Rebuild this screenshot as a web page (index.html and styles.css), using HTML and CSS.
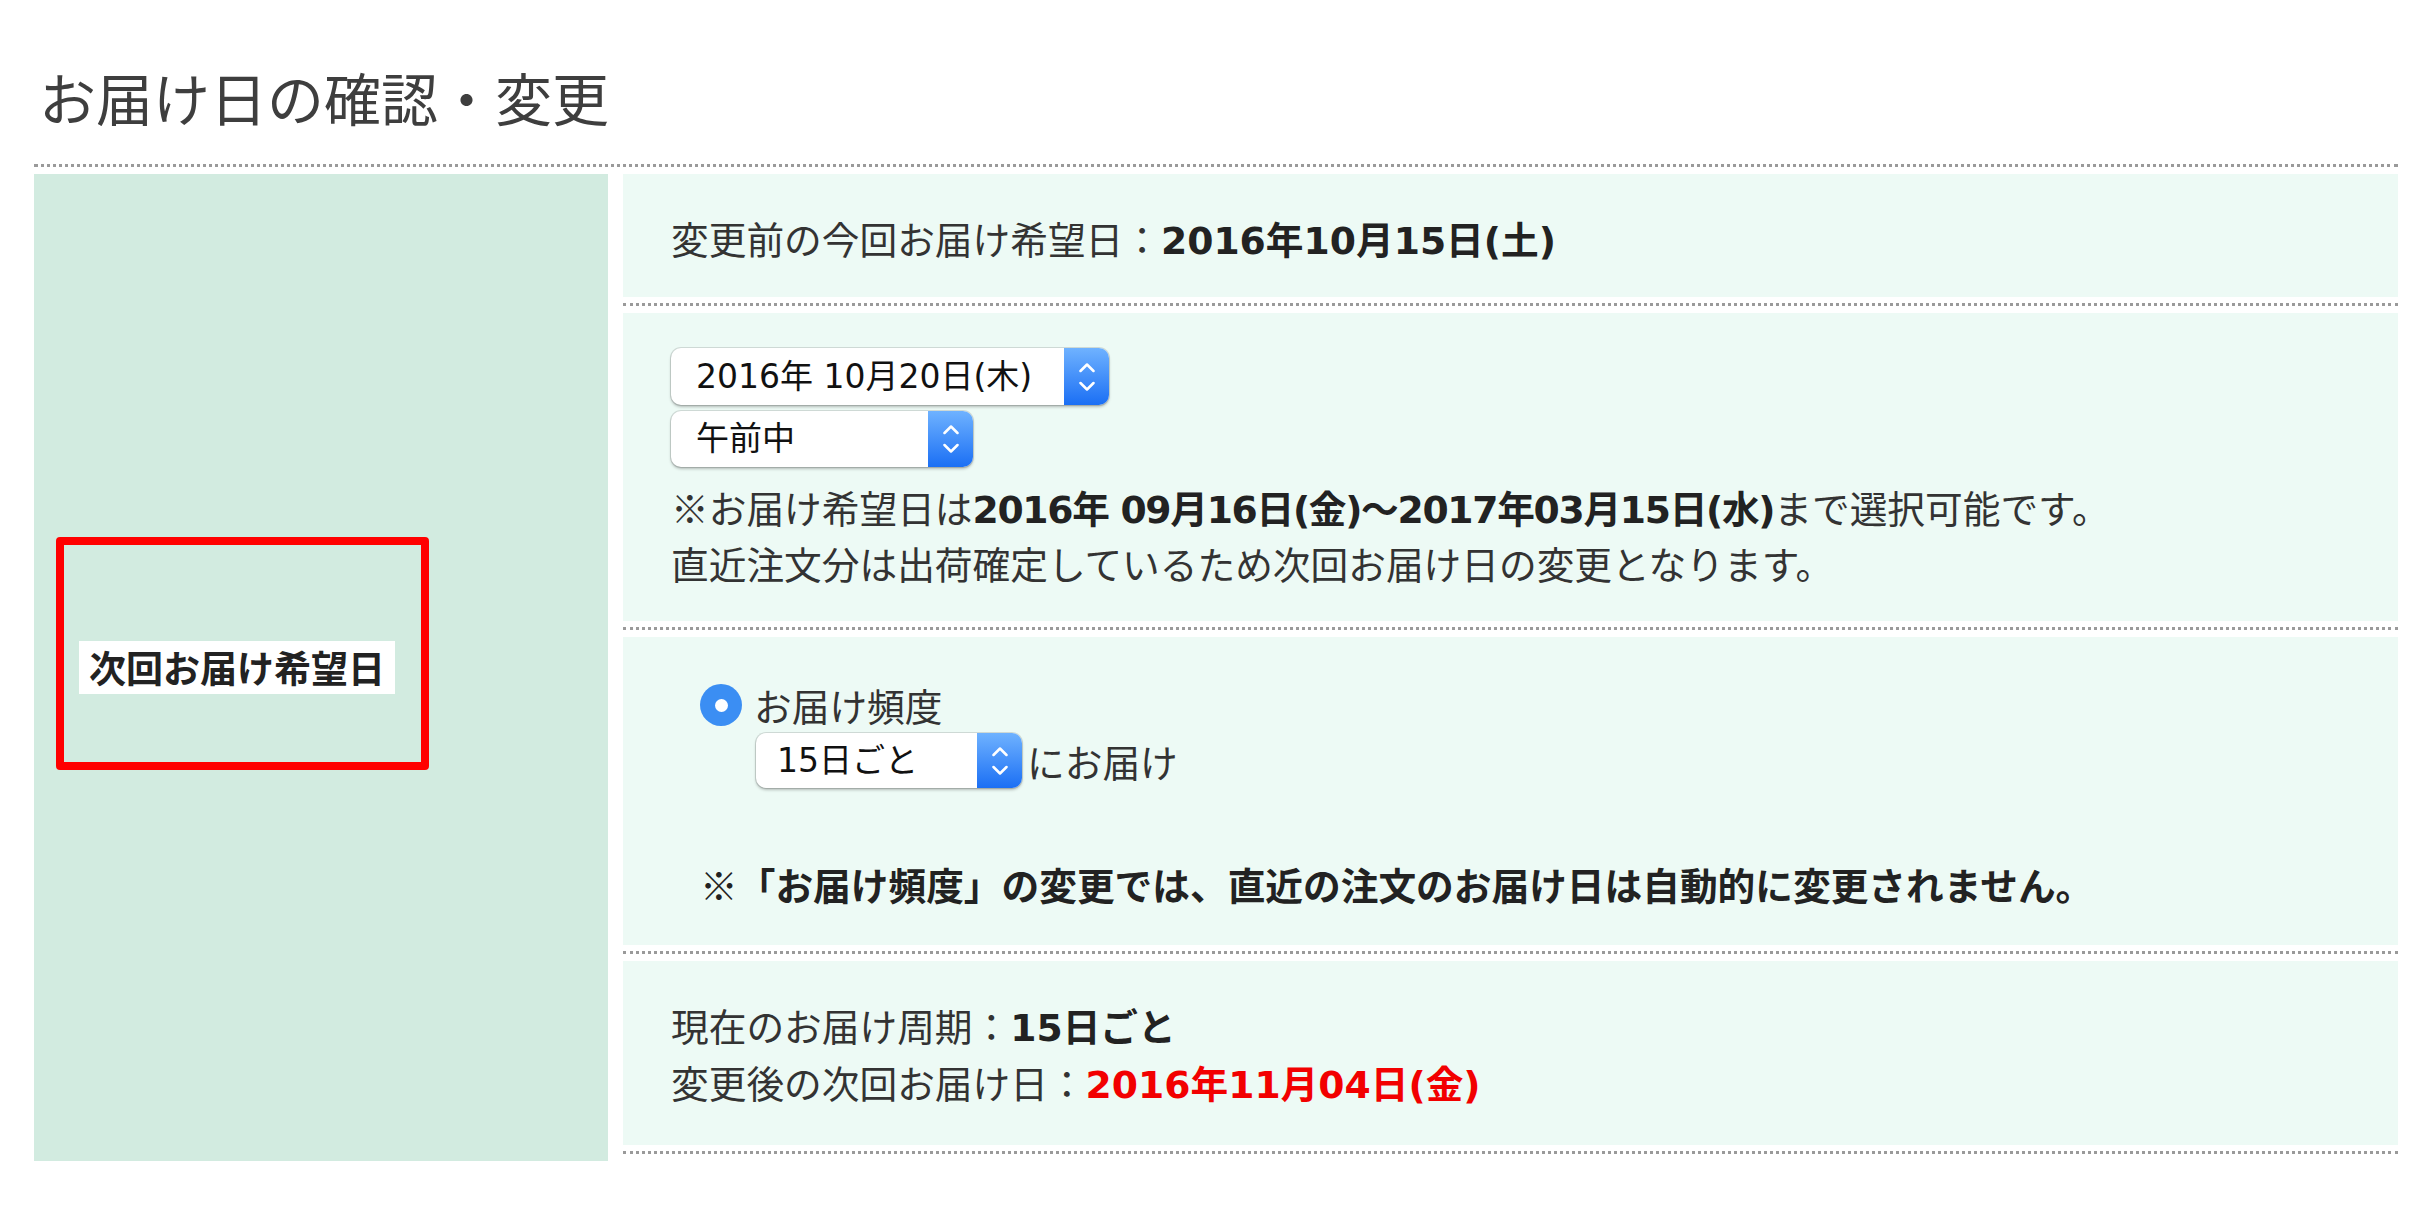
FILE: index.html
```html
<!DOCTYPE html>
<html lang="ja">
<head>
<meta charset="utf-8">
<title>お届け日の確認・変更</title>
<link rel="stylesheet" href="styles.css">
</head>
<body>
<div class="page">
  <h1 class="title">お届け日の確認・変更</h1>
  <div class="table">
    <div class="label-cell">
      <span class="label">次回お届け希望日</span>
      <div class="annot"></div>
    </div>
    <div class="right">
      <div class="row row1">変更前の今回お届け希望日：<b>2016年10月15日(土)</b></div>
      <div class="sep"></div>
      <div class="row row2">
        <div class="select sel-date"><span class="sel-text">2016年 10月20日(木)</span><span class="sel-arrow"><svg width="16" height="30" viewBox="0 0 16 30"><polyline points="1.5,9 8,2.5 14.5,9" /><polyline points="1.5,21 8,27.5 14.5,21" /></svg></span></div>
        <div class="select sel-time"><span class="sel-text">午前中</span><span class="sel-arrow"><svg width="16" height="30" viewBox="0 0 16 30"><polyline points="1.5,9 8,2.5 14.5,9" /><polyline points="1.5,21 8,27.5 14.5,21" /></svg></span></div>
        <p class="note">※お届け希望日は<b>2016年 09月16日(金)〜2017年03月15日(水)</b>まで選択可能です。<br>直近注文分は出荷確定しているため次回お届け日の変更となります。</p>
      </div>
      <div class="sep"></div>
      <div class="row row3">
        <div class="radio-line"><span class="radio"><span class="radio-dot"></span></span><span>お届け頻度</span></div>
        <div class="freq-line"><div class="select sel-freq"><span class="sel-text">15日ごと</span><span class="sel-arrow"><svg width="16" height="30" viewBox="0 0 16 30"><polyline points="1.5,9 8,2.5 14.5,9" /><polyline points="1.5,21 8,27.5 14.5,21" /></svg></span></div><span class="freq-after">にお届け</span></div>
        <p class="warn">※「お届け頻度」の変更では、直近の注文のお届け日は自動的に変更されません。</p>
      </div>
      <div class="sep"></div>
      <div class="row row4">現在のお届け周期：<b>15日ごと</b><br>変更後の次回お届け日：<b class="red">2016年11月04日(金)</b></div>
      <div class="sep"></div>
    </div>
  </div>
</div>
</body>
</html>
```

FILE: styles.css
```css
html, body {
  margin: 0;
  padding: 0;
  background: #ffffff;
}
body {
  font-family: "Noto Sans CJK JP", "Noto Sans", sans-serif;
  color: #333333;
}
.page {
  padding: 0 28px 0 34px;
}
.title {
  margin: 0;
  padding: 56px 0 28px 5px;
  font-size: 57px;
  line-height: 80px;
  font-weight: normal;
  color: #3e3e3e;
}
.table {
  border-top: 3px dotted #9a9a9a;
  padding-top: 7px;
  display: flex;
}
.label-cell {
  position: relative;
  width: 574px;
  flex: none;
  background: #d2ebe0;
  display: flex;
  align-items: center;
  padding-left: 45px;
  box-sizing: border-box;
}
.label {
  background: #ffffff;
  font-size: 37px;
  line-height: 53px;
  font-weight: bold;
  color: #222222;
  padding: 0 10px;
}
.annot {
  position: absolute;
  left: 22px;
  top: 363px;
  width: 373px;
  height: 233px;
  box-sizing: border-box;
  border: 8px solid #ff0000;
  border-radius: 4px;
}
.right {
  flex: 1;
  margin-left: 15px;
}
.row {
  background: #edfaf5;
  font-size: 37.7px;
  line-height: 56px;
  padding-left: 48px;
}
.row b {
  font-family: "DejaVu Sans", "Noto Sans CJK JP", sans-serif;
  line-height: 1;
  color: #222222;
}
.note b {
  letter-spacing: -1.3px;
}
.sep {
  border-top: 3px dotted #9a9a9a;
  margin: 6px 0 7px;
}
.row1 {
  padding-top: 36px;
  padding-bottom: 31px;
}
.row2 {
  padding-top: 35px;
  padding-bottom: 30px;
}
.select {
  display: inline-flex;
  box-sizing: border-box;
  background: #ffffff;
  border-radius: 10px;
  box-shadow: 0 0 0 1px rgba(0,0,0,0.12), 0 2px 3px rgba(0,0,0,0.25);
  overflow: hidden;
  font-family: "DejaVu Sans", "Noto Sans CJK JP", sans-serif;
  font-size: 33px;
  color: #111111;
  vertical-align: top;
}
.sel-text {
  flex: 1;
  padding-left: 25px;
  display: flex;
  align-items: center;
}
.sel-arrow {
  width: 45px;
  flex: none;
  background: linear-gradient(#6fb2ff, #1b6ff4);
  display: flex;
  align-items: center;
  justify-content: center;
}
.sel-arrow svg polyline {
  fill: none;
  stroke: #ffffff;
  stroke-width: 2.5;
  stroke-linecap: round;
  stroke-linejoin: round;
}
.sel-date {
  width: 438px;
  height: 57px;
  display: flex;
}
.sel-time {
  width: 302px;
  height: 56px;
  display: flex;
  margin-top: 6px;
}
.note {
  margin: 12px 0 0;
}
.row3 {
  padding-top: 40px;
  padding-bottom: 33px;
  padding-left: 77px;
}
.radio-line {
  display: flex;
  align-items: center;
  height: 56px;
}
.radio {
  width: 42px;
  height: 42px;
  border-radius: 50%;
  background: #3b8ef3;
  display: flex;
  align-items: center;
  justify-content: center;
  margin-right: 12px;
}
.radio-dot {
  width: 13px;
  height: 13px;
  border-radius: 50%;
  background: #ffffff;
}
.freq-line {
  display: flex;
  align-items: center;
  margin-left: 56px;
  height: 55px;
}
.sel-freq {
  width: 266px;
  height: 55px;
  display: flex;
}
.sel-freq .sel-text {
  padding-left: 21px;
}
.freq-after {
  margin-left: 5px;
}
.warn {
  margin: 68px 0 0;
  font-weight: bold;
  color: #222222;
}
.row4 {
  padding-top: 35px;
  padding-bottom: 35px;
  line-height: 57px;
}
.row4 b.red {
  color: #f20000;
}
```
